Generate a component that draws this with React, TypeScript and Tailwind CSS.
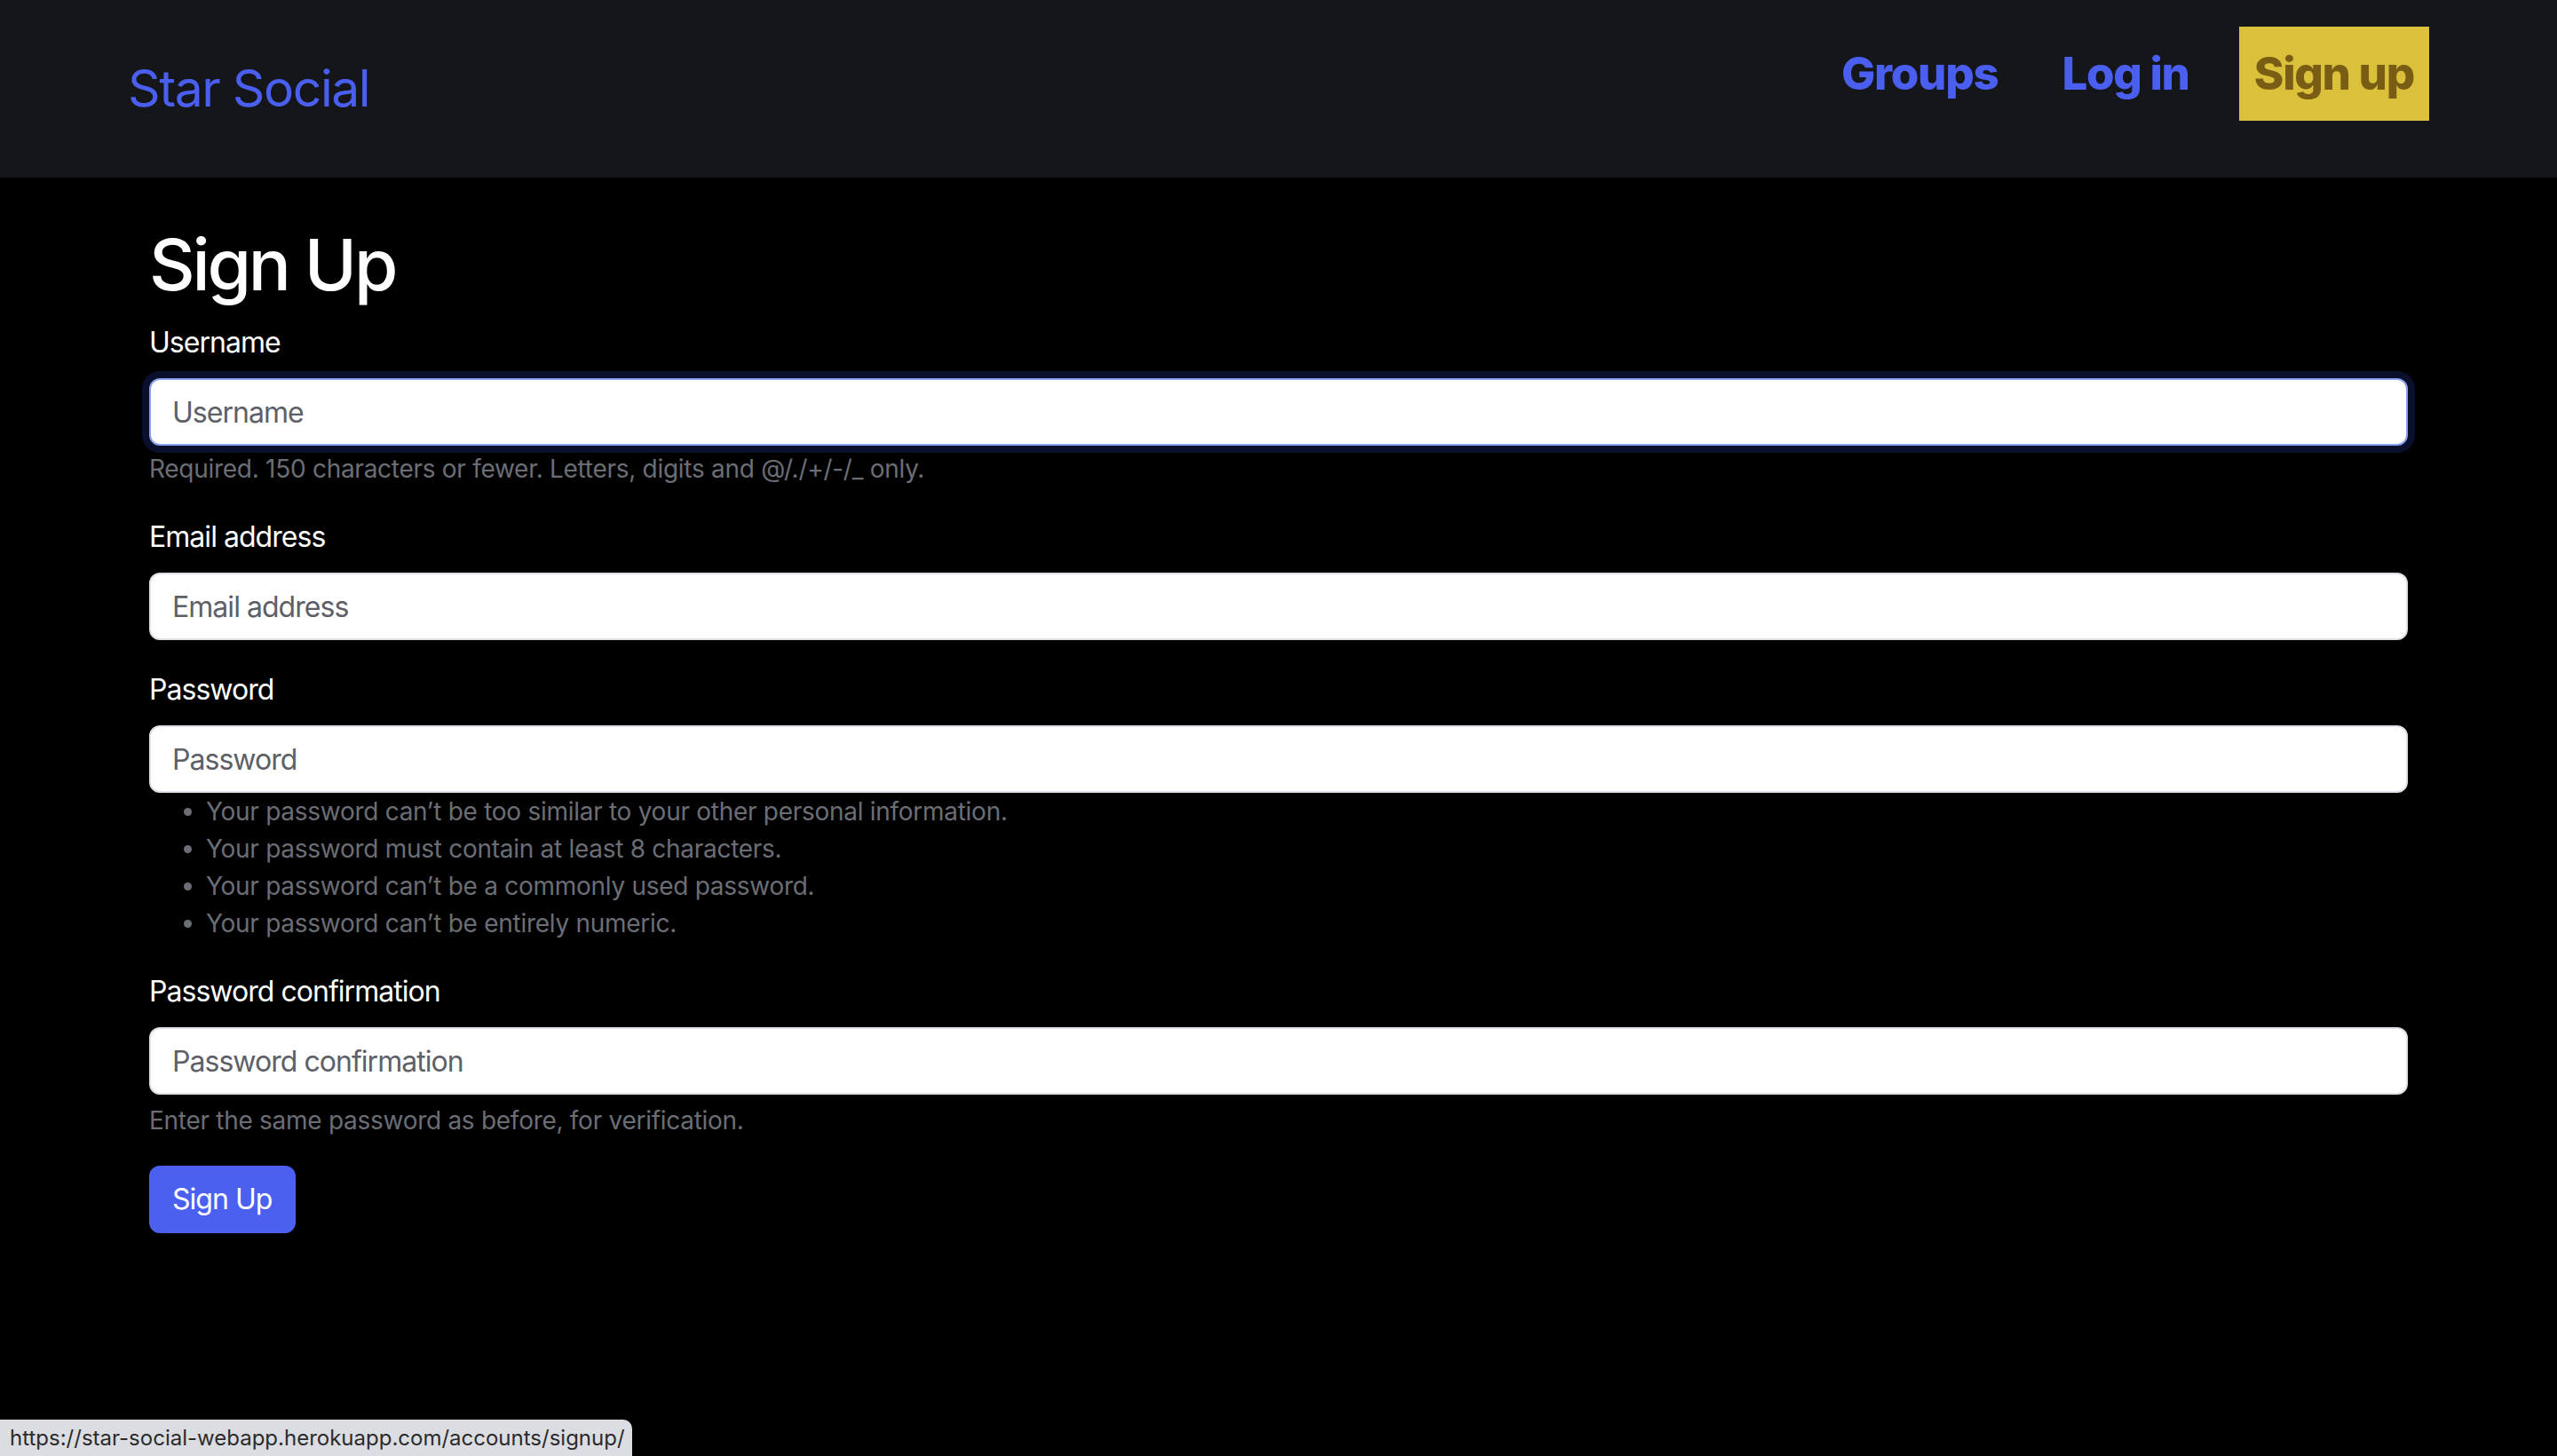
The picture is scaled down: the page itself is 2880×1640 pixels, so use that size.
import React from 'react'

const passwordRules = [
  'Your password can’t be too similar to your other personal information.',
  'Your password must contain at least 8 characters.',
  'Your password can’t be a commonly used password.',
  'Your password can’t be entirely numeric.',
]

function Field({
  label,
  placeholder,
  type = 'text',
  focused = false,
  children,
}: {
  label: string
  placeholder: string
  type?: string
  focused?: boolean
  children?: React.ReactNode
}) {
  return (
    <div className="mb-[32px] flex flex-col">
      <label className="mb-[16px] text-[32px] leading-[48px] tracking-[-0.03em] text-white">{label}</label>
      <input
        type={type}
        placeholder={placeholder}
        className={`h-[76px] w-full rounded-[12px] border-2 bg-white px-[24px] text-[32px] leading-[48px] tracking-[-0.03em] text-[#212529] outline-none placeholder:text-[#5d6067] ${
          focused ? 'border-[#8ba2f0] shadow-[0_0_0_8px_#0a0f2c]' : 'border-[#dee2e6]'
        }`}
      />
      {children}
    </div>
  )
}

function Navbar() {
  return (
    <header className="h-[200px] bg-[#15161a]">
      <div className="mx-auto flex h-full w-[2592px] justify-between">
        <a className="flex items-center text-[57px] tracking-[-0.025em] text-[#4a5ff0]">Star Social</a>
        <nav className="mt-[30px] flex h-[106px] items-center text-[51px] font-extrabold tracking-[-0.025em]">
          <a className="text-[#4a5ff0]">Groups</a>
          <a className="ml-[72px] text-[#4a5ff0]">Log in</a>
          <a className="ml-[56px] flex h-full items-center bg-[#dbc13b] px-[17px] text-[#7a5d14]">Sign up</a>
        </nav>
      </div>
    </header>
  )
}

export default function App() {
  return (
    <div className="relative min-h-screen bg-black" style={{ fontFamily: 'Inter, "Noto Sans", sans-serif' }}>
      <Navbar />

      <main className="mx-auto w-[2544px] pt-[50px]">
        <h1 className="mb-[16px] text-[80px] font-medium leading-[96px] tracking-[-0.04em] text-white">Sign Up</h1>

        <form className="flex flex-col">
          <Field label="Username" placeholder="Username" focused>
            <div className="mt-[5px] text-[28px] leading-[42px] tracking-[-0.01em] text-[#6b6e75]">
              Required. 150 characters or fewer. Letters, digits and @/./+/-/_ only.
            </div>
          </Field>

          <Field label="Email address" placeholder="Email address" type="email" />

          <Field label="Password" placeholder="Password" type="password">
            <ul className="list-disc pl-[64px] text-[28px] leading-[42px] tracking-[-0.01em] text-[#6b6e75]">
              {passwordRules.map((rule) => (
                <li key={rule}>{rule}</li>
              ))}
            </ul>
          </Field>

          <Field label="Password confirmation" placeholder="Password confirmation" type="password">
            <div className="mt-[8px] text-[28px] leading-[42px] tracking-[-0.01em] text-[#6b6e75]">
              Enter the same password as before, for verification.
            </div>
          </Field>

          <div>
            <button
              type="button"
              className="-mt-[2px] h-[76px] rounded-[12px] border-2 border-[#4c60f0] bg-[#4c60f0] px-[24px] text-[32px] leading-[48px] tracking-[-0.03em] text-white"
            >
              Sign Up
            </button>
          </div>
        </form>
      </main>

      {/* browser status bubble */}
      <div className="absolute bottom-0 left-0 flex h-[41px] w-[712px] items-center rounded-tr-[10px] bg-[#dcdde2] pl-[11px] text-[24px] text-[#2b2b2b]">
        https://star-social-webapp.herokuapp.com/accounts/signup/
      </div>
    </div>
  )
}
